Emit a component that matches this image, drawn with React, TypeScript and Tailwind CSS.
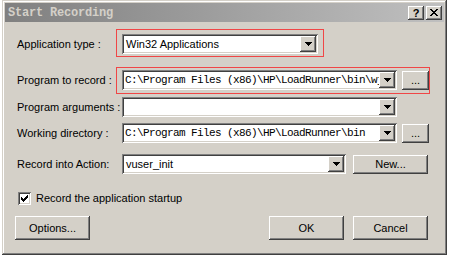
const raised =
  "bg-[#d4d0c8] shadow-[inset_-1px_-1px_#404040,inset_1px_1px_#ffffff,inset_-2px_-2px_#808080,inset_2px_2px_#d4d0c8]";
const sunken =
  "bg-white shadow-[inset_1px_1px_#808080,inset_-1px_-1px_#ffffff,inset_2px_2px_#404040,inset_-2px_-2px_#d4d0c8]";

const Arrow = () => (
  <div className={`w-[16px] h-[16px] mr-[2px] shrink-0 flex items-center justify-center ${raised}`}>
    <svg width="7" height="4" viewBox="0 0 7 4" shapeRendering="crispEdges">
      <path d="M0 0h7v1H0zM1 1h5v1H1zM2 2h3v1H2zM3 3h1v1H3z" fill="#000" />
    </svg>
  </div>
);

const Combo = ({ className, text, mono }: { className: string; text?: string; mono?: boolean }) => (
  <div className={`h-[20px] shrink-0 flex items-center ${sunken} ${className}`}>
    <div
      className={`flex-1 min-w-0 overflow-hidden whitespace-nowrap text-black ${
        mono
          ? "pl-[3px] font-['Liberation_Mono',monospace] text-[11px] tracking-[-0.6px]"
          : "pl-[4px] text-[11px]"
      }`}
    >
      {text}
    </div>
    <Arrow />
  </div>
);

const Btn = ({ className, children }: { className: string; children: React.ReactNode }) => (
  <div className={`shrink-0 flex items-center justify-center text-[11px] text-black ${raised} ${className}`}>
    {children}
  </div>
);

const Label = ({ className, children }: { className: string; children: React.ReactNode }) => (
  <div className={`shrink-0 h-[20px] leading-[20px] pl-[12px] whitespace-nowrap ${className}`}>{children}</div>
);

const path = "C:\\Program Files (x86)\\HP\\LoadRunner\\bin";

export default function App() {
  return (
    <div className="w-[451px] h-[258px] bg-white relative font-['Liberation_Sans',Arial,sans-serif] text-[11px] text-black">
      <div className="absolute left-[2px] top-0 w-[445px] h-[255px] bg-[#d4d0c8] p-[3px] flex flex-col shadow-[inset_-1px_-1px_#404040,inset_1px_1px_#d4d0c8,inset_-2px_-2px_#808080,inset_2px_2px_#ffffff]">
        {/* title bar */}
        <div className="h-[19px] shrink-0 flex items-center bg-gradient-to-r from-[#808080] to-[#c0c0c0] pl-[3px] pr-[2px]">
          <span className="flex-1 font-['Liberation_Mono',monospace] font-bold text-[12px] tracking-[-0.2px] text-[#d4d0c8]">
            Start Recording
          </span>
          <div className={`w-[16px] h-[14px] flex items-center justify-center ${raised}`}>
            <span className="font-bold text-[11px] leading-none mt-[1px]">?</span>
          </div>
          <div className={`w-[16px] h-[14px] ml-[2px] flex items-center justify-center ${raised}`}>
            <svg width="8" height="7" viewBox="0 0 8 7" shapeRendering="crispEdges">
              <path d="M0 0h2v1H0zM6 0h2v1H6zM1 1h2v1H1zM5 1h2v1H5zM2 2h4v1H2zM3 3h2v1H3zM2 4h4v1H2zM1 5h2v1H1zM5 5h2v1H5zM0 6h2v1H0zM6 6h2v1H6z" fill="#000" />
            </svg>
          </div>
        </div>

        {/* body */}
        <div className="flex-1 flex flex-col pt-[7px]">
          {/* Application type */}
          <div className="flex items-start">
            <Label className="w-[111px] mt-[5px]">Application type :</Label>
            <div className="border border-[#f04646] pt-[4px] pb-[2px] px-[5px] h-[28px]">
              <Combo className="w-[196px]" text="Win32 Applications" />
            </div>
          </div>

          {/* Program to record */}
          <div className="flex items-start mt-[10px]">
            <Label className="w-[111px] mt-[3px]">Program to record :</Label>
            <div className="border border-[#f04646] pt-[2px] pb-[3px] pl-[5px] h-[27px] flex items-start">
              <Combo className="w-[275px]" text={path + "\\wj"} mono />
              <Btn className="ml-[5px] mt-[1px] w-[27px] h-[19px]">...</Btn>
            </div>
          </div>

          {/* Program arguments */}
          <div className="flex items-start mt-[3px]">
            <Label className="w-[117px]">Program arguments :</Label>
            <Combo className="w-[275px]" />
          </div>

          {/* Working directory */}
          <div className="flex items-start mt-[6px]">
            <Label className="w-[117px]">Working directory :</Label>
            <Combo className="w-[275px]" text={path} mono />
            <Btn className="ml-[5px] mt-[1px] w-[27px] h-[19px]">...</Btn>
          </div>

          {/* Record into Action */}
          <div className="flex items-start mt-[11px]">
            <Label className="w-[117px]">Record into Action:</Label>
            <Combo className="w-[224px]" text="vuser_init" />
            <Btn className="ml-[7px] mt-[1px] w-[75px] h-[19px]">New...</Btn>
          </div>

          {/* checkbox */}
          <div className="flex items-center mt-[18px] pl-[13px] h-[13px]">
            <div className={`w-[13px] h-[13px] flex items-center justify-center ${sunken}`}>
              <svg width="7" height="7" viewBox="0 0 7 7" shapeRendering="crispEdges">
                <path d="M6 0h1v1H6zM5 1h2v1H5zM0 2h1v1H0zM4 2h3v1H4zM0 3h2v1H0zM3 3h3v1H3zM0 4h5v1H0zM1 5h3v1H1zM2 6h1v1H2z" fill="#000" />
              </svg>
            </div>
            <span className="ml-[5px]">Record the application startup</span>
          </div>

          {/* buttons */}
          <div className="flex items-start mt-[11px] pl-[10px]">
            <Btn className="w-[75px] h-[24px]">Options...</Btn>
            <div className="flex-1" />
            <Btn className="w-[75px] h-[24px]">OK</Btn>
            <Btn className="ml-[9px] mr-[16px] w-[75px] h-[24px]">Cancel</Btn>
          </div>
        </div>
      </div>
    </div>
  );
}
